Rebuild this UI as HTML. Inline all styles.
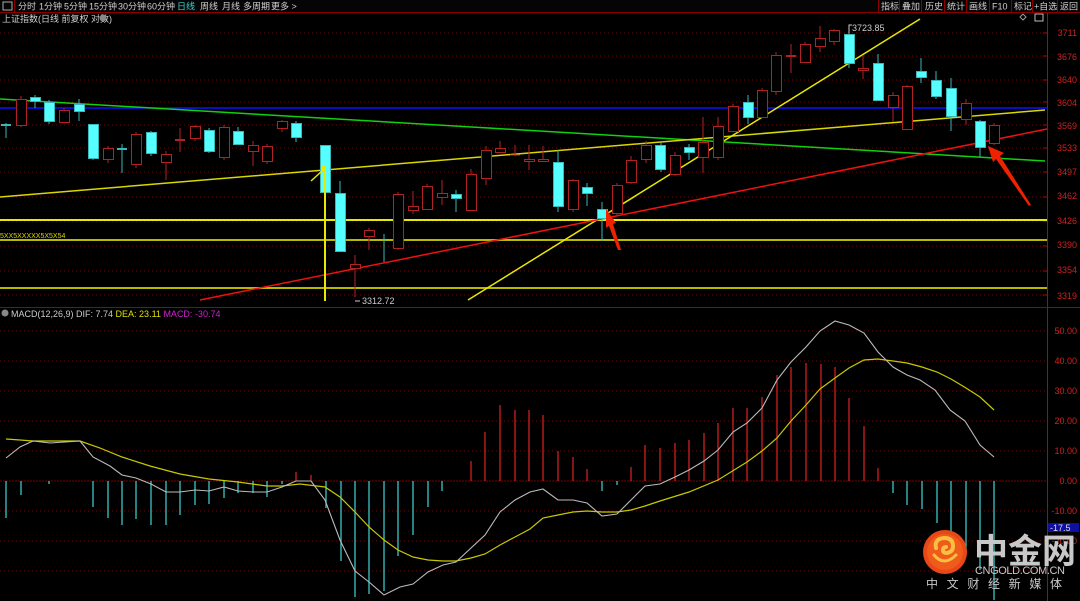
<!DOCTYPE html>
<html><head><meta charset="utf-8"><style>
html,body{margin:0;padding:0;background:#000;width:1080px;height:601px;overflow:hidden;font-family:"Liberation Sans","Noto Sans CJK SC",sans-serif}
svg{display:block}
text{font-family:"Liberation Sans","Noto Sans CJK SC",sans-serif}
</style></head><body>
<svg width="1080" height="601" viewBox="0 0 1080 601" xmlns="http://www.w3.org/2000/svg">
<rect width="1080" height="601" fill="#000"/>
<!-- top bar -->
<rect x="0" y="0" width="1080" height="12" fill="#050505"/>
<line x1="0" y1="12.5" x2="1080" y2="12.5" stroke="#8a0000"/>
<rect x="3" y="2" width="9" height="8" fill="none" stroke="#aaa"/>
<line x1="14.5" y1="0" x2="14.5" y2="12" stroke="#8a0000"/>
<g font-size="9" fill="#cfcfcf">
<text x="18" y="9.5">分时</text><text x="39" y="9.5">1分钟</text><text x="64" y="9.5">5分钟</text><text x="89" y="9.5">15分钟</text><text x="118" y="9.5">30分钟</text><text x="147" y="9.5">60分钟</text>
<text x="177" y="9.5" fill="#3ad4d4">日线</text><text x="200" y="9.5">周线</text><text x="222" y="9.5">月线</text><text x="243" y="9.5">多周期</text><text x="271" y="9.5">更多 &gt;</text>
<text x="881" y="9.5">指标</text><text x="902" y="9.5">叠加</text><text x="925" y="9.5">历史</text><text x="947" y="9.5">统计</text><text x="969" y="9.5">画线</text><text x="992" y="9.5">F10</text><text x="1014" y="9.5">标记</text><text x="1034" y="9.5">+自选</text><text x="1060" y="9.5">返回</text>
</g>
<g stroke="#8a0000"><line x1="878.5" y1="0" x2="878.5" y2="12"/><line x1="899.5" y1="0" x2="899.5" y2="12"/><line x1="921.5" y1="0" x2="921.5" y2="12"/><line x1="944.5" y1="0" x2="944.5" y2="12"/><line x1="966.5" y1="0" x2="966.5" y2="12"/><line x1="989.5" y1="0" x2="989.5" y2="12"/><line x1="1011.5" y1="0" x2="1011.5" y2="12"/><line x1="1032.5" y1="0" x2="1032.5" y2="12"/><line x1="1057.5" y1="0" x2="1057.5" y2="12"/></g>
<text x="2" y="22" font-size="9" fill="#cfcfcf">上证指数(日线 前复权 对数)</text>
<circle cx="103" cy="18" r="3.5" fill="#888"/>
<path d="M1023 14 l3 3 l-3 3 l-3 -3z" fill="none" stroke="#999"/>
<rect x="1035" y="14" width="8" height="7" fill="none" stroke="#bbb"/>
<!-- right axis line -->
<line x1="1047.5" y1="13" x2="1047.5" y2="601" stroke="#c00000"/>
<!-- main grid -->
<g stroke="#7a0000" stroke-dasharray="1,3">
<line x1="0" y1="33" x2="1047" y2="33"/><line x1="0" y1="56" x2="1047" y2="56"/><line x1="0" y1="80" x2="1047" y2="80"/><line x1="0" y1="102" x2="1047" y2="102"/><line x1="0" y1="125" x2="1047" y2="125"/><line x1="0" y1="148" x2="1047" y2="148"/><line x1="0" y1="172" x2="1047" y2="172"/><line x1="0" y1="197" x2="1047" y2="197"/><line x1="0" y1="221" x2="1047" y2="221"/><line x1="0" y1="246" x2="1047" y2="246"/><line x1="0" y1="271" x2="1047" y2="271"/><line x1="0" y1="295" x2="1047" y2="295"/>
</g>
<g font-size="9" fill="#d02020" text-anchor="end">
<text x="1077" y="36">3711</text><text x="1077" y="60">3676</text><text x="1077" y="83">3640</text><text x="1077" y="106">3604</text><text x="1077" y="129">3569</text><text x="1077" y="151">3533</text><text x="1077" y="175">3497</text><text x="1077" y="199">3462</text><text x="1077" y="224">3426</text><text x="1077" y="248">3390</text><text x="1077" y="273">3354</text><text x="1077" y="299">3319</text>
</g>
<g stroke="#c00000"><line x1="1043" y1="33" x2="1047" y2="33"/><line x1="1043" y1="56" x2="1047" y2="56"/><line x1="1043" y1="80" x2="1047" y2="80"/><line x1="1043" y1="102" x2="1047" y2="102"/><line x1="1043" y1="125" x2="1047" y2="125"/><line x1="1043" y1="148" x2="1047" y2="148"/><line x1="1043" y1="172" x2="1047" y2="172"/><line x1="1043" y1="197" x2="1047" y2="197"/><line x1="1043" y1="221" x2="1047" y2="221"/><line x1="1043" y1="246" x2="1047" y2="246"/><line x1="1043" y1="271" x2="1047" y2="271"/><line x1="1043" y1="295" x2="1047" y2="295"/></g>
<!-- horizontal lines -->
<line x1="0" y1="108" x2="1047" y2="108" stroke="#1010ff" stroke-width="1.5"/>
<line x1="0" y1="220" x2="1047" y2="220" stroke="#e8e800" stroke-width="2"/>
<line x1="0" y1="240" x2="1047" y2="240" stroke="#b8b800" stroke-width="2"/>
<line x1="0" y1="288" x2="1047" y2="288" stroke="#b8b800" stroke-width="2"/>
<text x="0" y="238" font-size="7" fill="#d8d800">5XX5XXXXX5X5X54</text>
<!-- trend lines -->
<line x1="0" y1="99" x2="1045" y2="161" stroke="#10d010" stroke-width="1.5"/>
<line x1="0" y1="197" x2="1045" y2="110" stroke="#d8d800" stroke-width="1.5"/>
<line x1="468" y1="300" x2="920" y2="19" stroke="#e8e800" stroke-width="1.5"/>
<line x1="200" y1="300" x2="1047" y2="129" stroke="#f01010" stroke-width="1.5"/>
<!-- candles -->
<g stroke-width="1">
<g stroke="#b22222" fill="#000">
<line x1="21" y1="96" x2="21" y2="127"/><rect x="16.5" y="99.5" width="10" height="26"/>
<line x1="64" y1="108" x2="64" y2="123"/><rect x="59.5" y="110.5" width="10" height="12"/>
<line x1="108" y1="146" x2="108" y2="163"/><rect x="103.5" y="148.5" width="10" height="11"/>
<line x1="136" y1="132" x2="136" y2="168"/><rect x="131.5" y="134.5" width="10" height="30"/>
<line x1="166" y1="151" x2="166" y2="180"/><rect x="161.5" y="154.5" width="10" height="8"/>
<line x1="180" y1="128" x2="180" y2="152"/><line x1="175" y1="140" x2="185" y2="140" stroke-width="2"/>
<line x1="195" y1="125" x2="195" y2="141"/><rect x="190.5" y="126.5" width="10" height="12"/>
<line x1="224" y1="125" x2="224" y2="160"/><rect x="219.5" y="127.5" width="10" height="30"/>
<line x1="253" y1="141" x2="253" y2="166"/><rect x="248.5" y="145.5" width="10" height="6"/>
<line x1="267" y1="144" x2="267" y2="164"/><rect x="262.5" y="146.5" width="10" height="15"/>
<line x1="282" y1="120" x2="282" y2="132"/><rect x="277.5" y="121.5" width="10" height="7"/>
<line x1="355" y1="255" x2="355" y2="297"/><rect x="350.5" y="264.5" width="10" height="4"/>
<line x1="369" y1="228" x2="369" y2="250"/><rect x="364.5" y="230.5" width="10" height="6"/>
<line x1="398" y1="192" x2="398" y2="250"/><rect x="393.5" y="194.5" width="10" height="54"/>
<line x1="413" y1="191" x2="413" y2="214"/><rect x="408.5" y="206.5" width="10" height="4"/>
<line x1="427" y1="184" x2="427" y2="210"/><rect x="422.5" y="186.5" width="10" height="23"/>
<line x1="442" y1="180" x2="442" y2="205"/><rect x="437.5" y="193.5" width="10" height="4"/>
<line x1="471" y1="169" x2="471" y2="211"/><rect x="466.5" y="174.5" width="10" height="36"/>
<line x1="486" y1="146" x2="486" y2="185"/><rect x="481.5" y="150.5" width="10" height="28"/>
<line x1="500" y1="141" x2="500" y2="153"/><rect x="495.5" y="148.5" width="10" height="4"/>
<line x1="515" y1="145" x2="515" y2="156"/><line x1="510" y1="155" x2="520" y2="155"/>
<line x1="529" y1="145" x2="529" y2="170"/><rect x="524.5" y="159.5" width="10" height="2"/>
<line x1="543" y1="146" x2="543" y2="162"/><rect x="538.5" y="159.5" width="10" height="2"/>
<line x1="573" y1="179" x2="573" y2="212"/><rect x="568.5" y="180.5" width="10" height="29"/>
<line x1="617" y1="183" x2="617" y2="215"/><rect x="612.5" y="185.5" width="10" height="28"/>
<line x1="631" y1="156" x2="631" y2="184"/><rect x="626.5" y="160.5" width="10" height="22"/>
<line x1="646" y1="141" x2="646" y2="163"/><rect x="641.5" y="145.5" width="10" height="14"/>
<line x1="675" y1="152" x2="675" y2="176"/><rect x="670.5" y="155.5" width="10" height="19"/>
<line x1="703" y1="117" x2="703" y2="173"/><rect x="698.5" y="142.5" width="10" height="15"/>
<line x1="718" y1="117" x2="718" y2="160"/><rect x="713.5" y="126.5" width="10" height="31"/>
<line x1="733" y1="104" x2="733" y2="132"/><rect x="728.5" y="106.5" width="10" height="25"/>
<line x1="762" y1="88" x2="762" y2="118"/><rect x="757.5" y="90.5" width="10" height="27"/>
<line x1="776" y1="52" x2="776" y2="95"/><rect x="771.5" y="55.5" width="10" height="36"/>
<line x1="791" y1="44" x2="791" y2="73"/><line x1="786" y1="56" x2="796" y2="56" stroke-width="2"/>
<line x1="805" y1="42" x2="805" y2="63"/><rect x="800.5" y="44.5" width="10" height="18"/>
<line x1="820" y1="26" x2="820" y2="52"/><rect x="815.5" y="38.5" width="10" height="8"/>
<line x1="834" y1="29" x2="834" y2="45"/><rect x="829.5" y="30.5" width="10" height="11"/>
<line x1="863" y1="55" x2="863" y2="79"/><rect x="858.5" y="68.5" width="10" height="2"/>
<line x1="893" y1="92" x2="893" y2="122"/><rect x="888.5" y="95.5" width="10" height="12"/>
<line x1="907" y1="85" x2="907" y2="130"/><rect x="902.5" y="86.5" width="10" height="43"/>
<line x1="966" y1="99" x2="966" y2="125"/><rect x="961.5" y="103.5" width="10" height="16"/>
<line x1="994" y1="123" x2="994" y2="145"/><rect x="989.5" y="125.5" width="10" height="18"/>
</g>
<g stroke="#3ab8b8" fill="#55ffff">
<line x1="6" y1="123" x2="6" y2="138"/><line x1="1" y1="125" x2="11" y2="125" stroke-width="2"/>
<line x1="35" y1="95" x2="35" y2="108"/><rect x="30.5" y="97.5" width="10" height="4"/>
<line x1="49" y1="100" x2="49" y2="124"/><rect x="44.5" y="102.5" width="10" height="19"/>
<line x1="79" y1="99" x2="79" y2="121"/><rect x="74.5" y="104.5" width="10" height="7"/>
<line x1="93" y1="124" x2="93" y2="160"/><rect x="88.5" y="124.5" width="10" height="34"/>
<line x1="122" y1="144" x2="122" y2="173"/><line x1="117" y1="149" x2="127" y2="149" stroke-width="2"/>
<line x1="151" y1="131" x2="151" y2="156"/><rect x="146.5" y="132.5" width="10" height="21"/>
<line x1="209" y1="128" x2="209" y2="153"/><rect x="204.5" y="130.5" width="10" height="21"/>
<line x1="238" y1="127" x2="238" y2="145"/><rect x="233.5" y="131.5" width="10" height="13"/>
<line x1="296" y1="121" x2="296" y2="142"/><rect x="291.5" y="123.5" width="10" height="14"/>
<rect x="320.5" y="145.5" width="10" height="47"/>
<line x1="340" y1="181" x2="340" y2="252"/><rect x="335.5" y="193.5" width="10" height="58"/>
<line x1="384" y1="234" x2="384" y2="262"/>
<line x1="456" y1="190" x2="456" y2="212"/><rect x="451.5" y="194.5" width="10" height="4"/>
<line x1="558" y1="150" x2="558" y2="212"/><rect x="553.5" y="162.5" width="10" height="44"/>
<line x1="587" y1="183" x2="587" y2="206"/><rect x="582.5" y="187.5" width="10" height="6"/>
<line x1="602" y1="202" x2="602" y2="241"/><rect x="597.5" y="209.5" width="10" height="9"/>
<line x1="661" y1="142" x2="661" y2="172"/><rect x="655.5" y="145.5" width="10" height="24"/>
<line x1="689" y1="144" x2="689" y2="160"/><rect x="684.5" y="147.5" width="10" height="5"/>
<line x1="748" y1="95" x2="748" y2="124"/><rect x="743.5" y="102.5" width="10" height="15"/>
<line x1="849" y1="26" x2="849" y2="68"/><rect x="844.5" y="34.5" width="10" height="29"/>
<line x1="878" y1="54" x2="878" y2="100"/><rect x="873.5" y="63.5" width="10" height="37"/>
<line x1="921" y1="58" x2="921" y2="83"/><rect x="916.5" y="71.5" width="10" height="6"/>
<line x1="936" y1="71" x2="936" y2="99"/><rect x="931.5" y="80.5" width="10" height="16"/>
<line x1="951" y1="78" x2="951" y2="131"/><rect x="946.5" y="88.5" width="10" height="28"/>
<line x1="980" y1="120" x2="980" y2="157"/><rect x="975.5" y="121.5" width="10" height="26"/>
</g>
</g>
<line x1="325" y1="168" x2="325" y2="301" stroke="#e8e800" stroke-width="2"/>
<line x1="311" y1="181" x2="322" y2="171" stroke="#e8e800" stroke-width="1.5"/>
<rect x="321" y="166" width="5" height="5" fill="#e8e800"/>
<!-- labels -->
<text x="852" y="31" font-size="9" fill="#ccc">3723.85</text>
<path d="M849 33 v-8 h3" fill="none" stroke="#ccc"/>
<text x="362" y="304" font-size="9" fill="#ccc">3312.72</text>
<path d="M355 301 h5" stroke="#ccc"/>
<!-- red arrows -->
<path d="M606 209 L616 223 L613 224 L621 250 L618 250 L609 226 L606 228 Z" fill="#ee2200"/>
<path d="M988 146 L1004 153 L1000 156 L1031 205 L1029 206 L996 159 L993 162 Z" fill="#ee2200"/>
<!-- MACD panel -->
<line x1="0" y1="307.5" x2="1080" y2="307.5" stroke="#a00000"/>
<circle cx="5" cy="313" r="3.5" fill="#888"/>
<text x="11" y="317" font-size="9" fill="#ccc">MACD(12,26,9) DIF: 7.74 <tspan fill="#e0e000">DEA: 23.11</tspan> <tspan fill="#d020d0">MACD: -30.74</tspan></text>
<g stroke="#7a0000" stroke-dasharray="1,3">
<line x1="0" y1="331" x2="1047" y2="331"/><line x1="0" y1="361" x2="1047" y2="361"/><line x1="0" y1="391" x2="1047" y2="391"/><line x1="0" y1="421" x2="1047" y2="421"/><line x1="0" y1="451" x2="1047" y2="451"/><line x1="0" y1="511" x2="1047" y2="511"/><line x1="0" y1="541" x2="1047" y2="541"/><line x1="0" y1="571" x2="1047" y2="571"/>
</g>
<line x1="0" y1="481" x2="1047" y2="481" stroke="#7a0000" stroke-dasharray="2,1"/>
<g font-size="9" fill="#d02020" text-anchor="end">
<text x="1077" y="334">50.00</text><text x="1077" y="364">40.00</text><text x="1077" y="394">30.00</text><text x="1077" y="424">20.00</text><text x="1077" y="454">10.00</text><text x="1077" y="484">0.00</text><text x="1077" y="514">-10.00</text><text x="1077" y="544">-20.00</text>
</g>
<rect x="1048" y="523" width="31" height="9" fill="#1010a0"/>
<text x="1050" y="531" font-size="9" fill="#ddd">-17.5</text>
<!-- macd bars -->
<g stroke="#3ac8c8" stroke-width="1.3">
<line x1="6" y1="481" x2="6" y2="518"/><line x1="21" y1="481" x2="21" y2="495"/><line x1="49" y1="481" x2="49" y2="484"/>
<line x1="93" y1="481" x2="93" y2="507"/><line x1="108" y1="481" x2="108" y2="518"/><line x1="122" y1="481" x2="122" y2="525"/><line x1="136" y1="481" x2="136" y2="519"/><line x1="151" y1="481" x2="151" y2="525"/><line x1="166" y1="481" x2="166" y2="525"/><line x1="180" y1="481" x2="180" y2="515"/><line x1="195" y1="481" x2="195" y2="505"/><line x1="209" y1="481" x2="209" y2="504"/><line x1="224" y1="481" x2="224" y2="498"/><line x1="238" y1="481" x2="238" y2="493"/><line x1="253" y1="481" x2="253" y2="493"/><line x1="267" y1="481" x2="267" y2="497"/><line x1="282" y1="481" x2="282" y2="484"/>
<line x1="326" y1="481" x2="326" y2="508"/><line x1="341" y1="481" x2="341" y2="561"/><line x1="355" y1="481" x2="355" y2="597"/><line x1="369" y1="481" x2="369" y2="594"/><line x1="384" y1="481" x2="384" y2="591"/><line x1="398" y1="481" x2="398" y2="556"/><line x1="413" y1="481" x2="413" y2="535"/><line x1="428" y1="481" x2="428" y2="507"/><line x1="442" y1="481" x2="442" y2="491"/>
<line x1="602" y1="481" x2="602" y2="491"/><line x1="617" y1="481" x2="617" y2="485"/>
<line x1="893" y1="481" x2="893" y2="493"/><line x1="907" y1="481" x2="907" y2="505"/><line x1="922" y1="481" x2="922" y2="509"/><line x1="937" y1="481" x2="937" y2="523"/><line x1="951" y1="481" x2="951" y2="545"/><line x1="966" y1="481" x2="966" y2="555"/><line x1="980" y1="481" x2="980" y2="570"/><line x1="994" y1="481" x2="994" y2="600"/>
</g>
<g stroke="#d02020" stroke-width="1.3">
<line x1="296" y1="481" x2="296" y2="472"/><line x1="311" y1="481" x2="311" y2="475"/>
<line x1="471" y1="481" x2="471" y2="461"/><line x1="485" y1="481" x2="485" y2="432"/><line x1="500" y1="481" x2="500" y2="405"/><line x1="515" y1="481" x2="515" y2="410"/><line x1="529" y1="481" x2="529" y2="410"/><line x1="543" y1="481" x2="543" y2="415"/><line x1="558" y1="481" x2="558" y2="451"/><line x1="573" y1="481" x2="573" y2="457"/><line x1="587" y1="481" x2="587" y2="469"/>
<line x1="631" y1="481" x2="631" y2="467"/><line x1="645" y1="481" x2="645" y2="445"/><line x1="660" y1="481" x2="660" y2="448"/><line x1="675" y1="481" x2="675" y2="443"/><line x1="689" y1="481" x2="689" y2="440"/><line x1="704" y1="481" x2="704" y2="433"/><line x1="718" y1="481" x2="718" y2="423"/><line x1="733" y1="481" x2="733" y2="408"/><line x1="747" y1="481" x2="747" y2="408"/><line x1="762" y1="481" x2="762" y2="397"/><line x1="777" y1="481" x2="777" y2="375"/><line x1="791" y1="481" x2="791" y2="367"/><line x1="806" y1="481" x2="806" y2="363"/><line x1="821" y1="481" x2="821" y2="364"/><line x1="835" y1="481" x2="835" y2="367"/><line x1="849" y1="481" x2="849" y2="398"/><line x1="864" y1="481" x2="864" y2="426"/><line x1="878" y1="481" x2="878" y2="468"/>
</g>
<!-- DEA -->
<polyline fill="none" stroke="#c8c800" stroke-width="1.2" points="6,439 20,440 33,441 80,441 100,448 122,457 150,466 180,474 209,479 238,482 267,486 282,486 300,484 325,487 340,497 355,512 369,527 384,540 398,550 413,557 428,560 443,561 456,561 471,558 485,554 500,545 515,537 530,529 543,518 558,515 573,512 587,511 602,512 617,512 631,510 645,506 660,501 689,492 718,480 747,462 762,451 777,438 791,421 806,405 820,389 835,378 849,368 864,360 878,359 893,361 907,363 922,367 937,372 951,379 966,388 980,397 994,410"/>
<!-- DIF -->
<polyline fill="none" stroke="#bbbbbb" stroke-width="1.1" points="6,458 20,447 33,441 50,443 80,441 93,457 110,466 122,475 136,478 151,484 166,492 180,492 195,490 209,491 224,487 238,491 253,492 267,492 282,487 296,481 311,481 325,500 340,540 355,571 369,582 384,595 400,587 413,584 428,572 443,565 456,562 471,548 485,535 500,512 515,500 530,492 543,489 558,500 573,500 587,503 602,516 617,514 631,500 645,486 660,484 675,477 689,470 704,461 718,450 733,432 747,423 762,408 777,380 791,362 806,347 820,331 835,321 849,325 864,333 878,352 893,367 907,375 920,380 935,390 950,410 965,421 980,445 994,457"/>
<!-- logo -->
<circle cx="945" cy="552" r="22" fill="#e84818"/>
<circle cx="945" cy="552" r="18" fill="#f05a1a"/>
<path d="M936 548 q-2 -9 8 -10 q9 0 9 8 q0 6 -6 7 q-4 0 -4 -3 q0 -3 3 -3" fill="none" stroke="#f8c040" stroke-width="4" stroke-linecap="round"/>
<path d="M934 555 q10 12 22 0" fill="none" stroke="#f8c040" stroke-width="3" stroke-linecap="round"/>
<text x="974" y="563" font-size="34" font-weight="bold" fill="#c8c8c8" font-family="'Noto Serif CJK SC','Noto Sans CJK SC',serif">中金网</text>
<text x="975" y="574" font-size="11" fill="#c8c8c8" textLength="90">CNGOLD.COM.CN</text>
<text x="926" y="588" font-size="12" fill="#c8c8c8" textLength="136">中文财经新媒体</text>
</svg>
</body></html>
